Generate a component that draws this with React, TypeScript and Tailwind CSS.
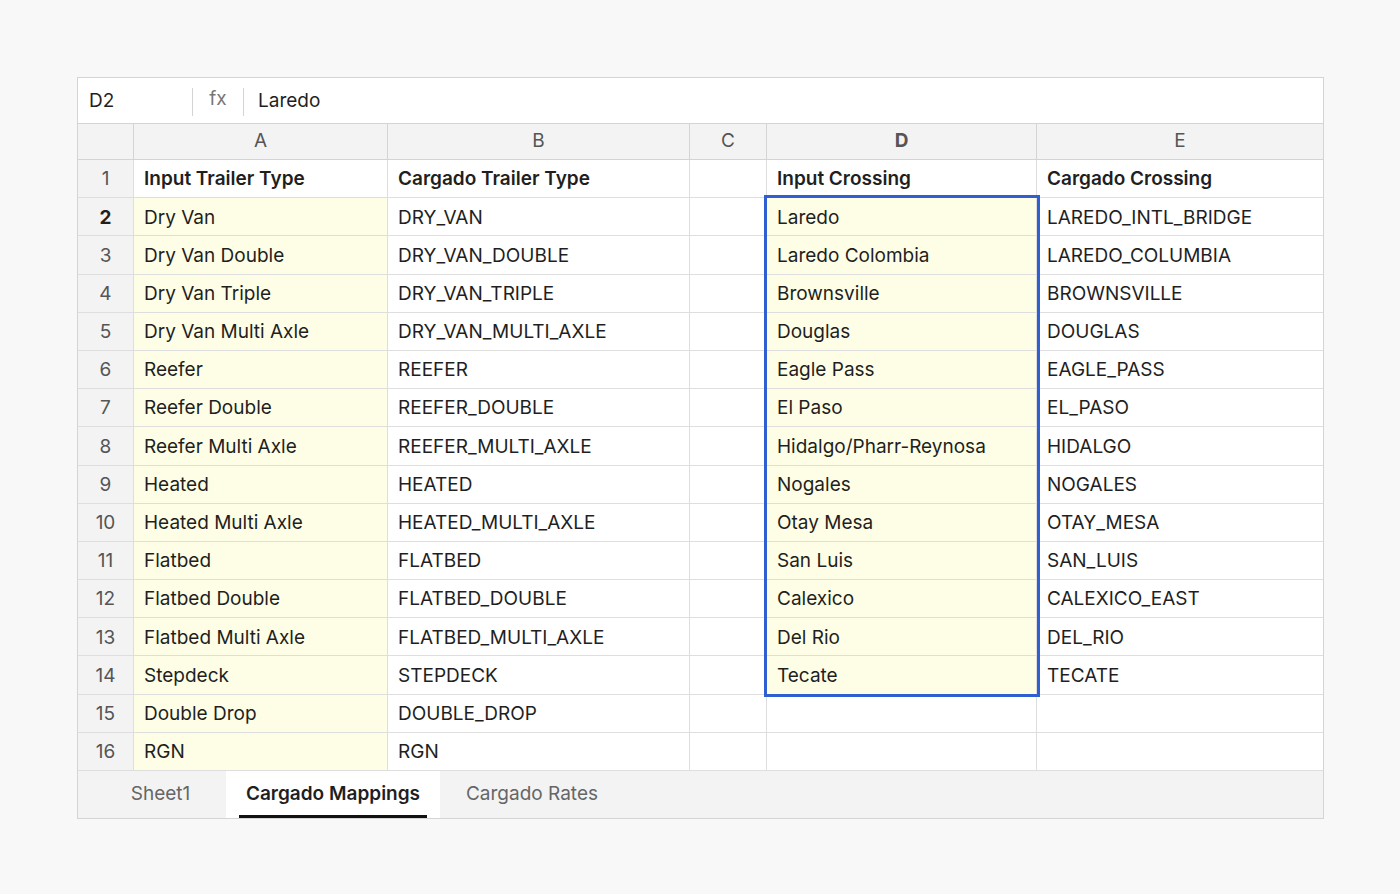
const rows: [string, string, string, string][] = [
  ["Dry Van", "DRY_VAN", "Laredo", "LAREDO_INTL_BRIDGE"],
  ["Dry Van Double", "DRY_VAN_DOUBLE", "Laredo Colombia", "LAREDO_COLUMBIA"],
  ["Dry Van Triple", "DRY_VAN_TRIPLE", "Brownsville", "BROWNSVILLE"],
  ["Dry Van Multi Axle", "DRY_VAN_MULTI_AXLE", "Douglas", "DOUGLAS"],
  ["Reefer", "REEFER", "Eagle Pass", "EAGLE_PASS"],
  ["Reefer Double", "REEFER_DOUBLE", "El Paso", "EL_PASO"],
  ["Reefer Multi Axle", "REEFER_MULTI_AXLE", "Hidalgo/Pharr-Reynosa", "HIDALGO"],
  ["Heated", "HEATED", "Nogales", "NOGALES"],
  ["Heated Multi Axle", "HEATED_MULTI_AXLE", "Otay Mesa", "OTAY_MESA"],
  ["Flatbed", "FLATBED", "San Luis", "SAN_LUIS"],
  ["Flatbed Double", "FLATBED_DOUBLE", "Calexico", "CALEXICO_EAST"],
  ["Flatbed Multi Axle", "FLATBED_MULTI_AXLE", "Del Rio", "DEL_RIO"],
  ["Stepdeck", "STEPDECK", "Tecate", "TECATE"],
  ["Double Drop", "DOUBLE_DROP", "", ""],
  ["RGN", "RGN", "", ""],
];

const cell = "h-[38.2px] border-r border-b border-[#dedede] flex items-center pt-[2px] px-[10px] whitespace-nowrap";
const hdr = "h-[36px] border-r border-b border-[#d4d4d4] bg-[#f3f3f3] flex items-center justify-center text-[#555]";

export default function App() {
  return (
    <div className="min-h-[894px] w-[1400px] bg-[#f8f8f8] pt-[77px] pl-[77px] text-[19px] text-[#1f1f1f]" style={{ fontFamily: "Inter, 'Liberation Sans', sans-serif" }}>
      <div className="w-[1247px] border border-[#d4d4d4] bg-white">
        <div className="h-[46px] flex items-center border-b border-[#d4d4d4] pt-[2px]">
          <div className="w-[114px] pl-[11px]">D2</div>
          <div className="w-px h-[28px] bg-[#d4d4d4]" />
          <div className="w-[50px] text-center text-[#777] -mt-[4px]">fx</div>
          <div className="w-px h-[28px] bg-[#d4d4d4]" />
          <div className="pl-[14px]">Laredo</div>
        </div>
        <div className="grid grid-cols-[56px_254px_302px_77px_270px_1fr]">
          <div className={hdr}></div>
          <div className={hdr}>A</div>
          <div className={hdr}>B</div>
          <div className={hdr}>C</div>
          <div className={hdr + " font-bold text-[#1f1f1f]"}>D</div>
          <div className={hdr + " border-r-0"}>E</div>

          <div className={cell + " bg-[#f3f3f3] justify-center text-[#555] border-[#d4d4d4] px-0"}>1</div>
          <div className={cell + " font-semibold"}>Input Trailer Type</div>
          <div className={cell + " font-semibold"}>Cargado Trailer Type</div>
          <div className={cell}></div>
          <div className={cell + " font-semibold"}>Input Crossing</div>
          <div className={cell + " font-semibold border-r-0"}>Cargado Crossing</div>

          {rows.map((r, i) => (
            <div key={i} className="contents">
              <div className={cell + " bg-[#f3f3f3] justify-center border-[#d4d4d4] px-0 " + (i === 0 ? "font-bold text-[#1f1f1f]" : "text-[#555]")}>{i + 2}</div>
              <div className={cell + " bg-[#fefee6]"}>{r[0]}</div>
              <div className={cell}>{r[1]}</div>
              <div className={cell}></div>
              <div className={cell + (i < 13 ? " bg-[#fefee6]" : "") + " relative"}>
                {r[2]}
                {i === 0 && (
                  <div className="absolute -top-[3px] -left-[3px] w-[276px] h-[502px] border-[3px] border-[#2f5fd0] z-10 pointer-events-none" />
                )}
              </div>
              <div className={cell + " border-r-0"}>{r[3]}</div>
            </div>
          ))}
        </div>
        <div className="h-[48px] bg-[#f3f3f3] flex items-stretch border-t border-[#d4d4d4] -mt-px">
          <div className="w-[148px] pl-[17px] flex items-center justify-center text-[#666]">Sheet1</div>
          <div className="w-[214px] bg-white flex flex-col items-center justify-center relative font-semibold">
            Cargado Mappings
            <div className="absolute bottom-0 left-[13px] right-[13px] h-[3px] bg-[#111]" />
          </div>
          <div className="w-[184px] flex items-center justify-center text-[#666]">Cargado Rates</div>
        </div>
      </div>
    </div>
  );
}
